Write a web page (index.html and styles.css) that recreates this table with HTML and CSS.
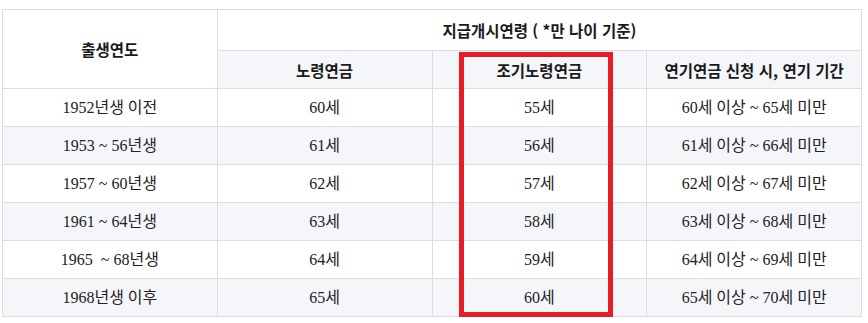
FILE: index.html
```html
<!DOCTYPE html>
<html lang="ko">
<head>
<meta charset="utf-8">
<link rel="stylesheet" href="styles.css">
</head>
<body>
<div class="wrap">
  <table class="pension">
    <thead>
      <tr class="h1">
        <th rowspan="2" class="c-white">출생연도</th>
        <th colspan="3" class="c-white">지급개시연령 ( *만 나이 기준)</th>
      </tr>
      <tr class="h2">
        <th>노령연금</th>
        <th>조기노령연금</th>
        <th>연기연금 신청 시, 연기 기간</th>
      </tr>
    </thead>
    <tbody>
      <tr><td>1952년생 이전</td><td>60세</td><td>55세</td><td>60세 이상 ~ 65세 미만</td></tr>
      <tr class="alt"><td>1953 ~ 56년생</td><td>61세</td><td>56세</td><td>61세 이상 ~ 66세 미만</td></tr>
      <tr><td>1957 ~ 60년생</td><td>62세</td><td>57세</td><td>62세 이상 ~ 67세 미만</td></tr>
      <tr class="alt"><td>1961 ~ 64년생</td><td>63세</td><td>58세</td><td>63세 이상 ~ 68세 미만</td></tr>
      <tr><td>1965 &nbsp;~ 68년생</td><td>64세</td><td>59세</td><td>64세 이상 ~ 69세 미만</td></tr>
      <tr class="alt"><td>1968년생 이후</td><td>65세</td><td>60세</td><td>65세 이상 ~ 70세 미만</td></tr>
    </tbody>
  </table>
  <div class="highlight"></div>
</div>
</body>
</html>
```

FILE: styles.css
```css
html, body {
  margin: 0;
  padding: 0;
  background: #ffffff;
}

.wrap {
  position: relative;
  padding: 9px 0 0 2px;
  width: 860px;
}

.pension {
  border-collapse: collapse;
  width: 860px;
  table-layout: fixed;
  font-family: "Liberation Serif", "Noto Sans CJK KR", serif;
  font-size: 16px;
  color: #222222;
}

.pension th,
.pension td {
  border: 1px solid #dddddd;
  text-align: center;
  vertical-align: middle;
  padding: 0;
  line-height: 20px;
}

.pension th {
  font-family: "Noto Sans CJK KR", sans-serif;
  font-weight: 700;
  font-size: 15.5px;
  color: #1a1a1a;
}

.h1 th { height: 40px; }
.h2 th { height: 37px; background: #f5f6fa; }
.pension th.c-white { background: #ffffff; }

.pension td { height: 37px; background: #ffffff; }
.pension tr.alt td { background: #f5f6fa; }

.highlight {
  position: absolute;
  left: 459px;
  top: 52px;
  width: 144px;
  height: 255px;
  border: 5px solid #e81c26;
  pointer-events: none;
}
```
